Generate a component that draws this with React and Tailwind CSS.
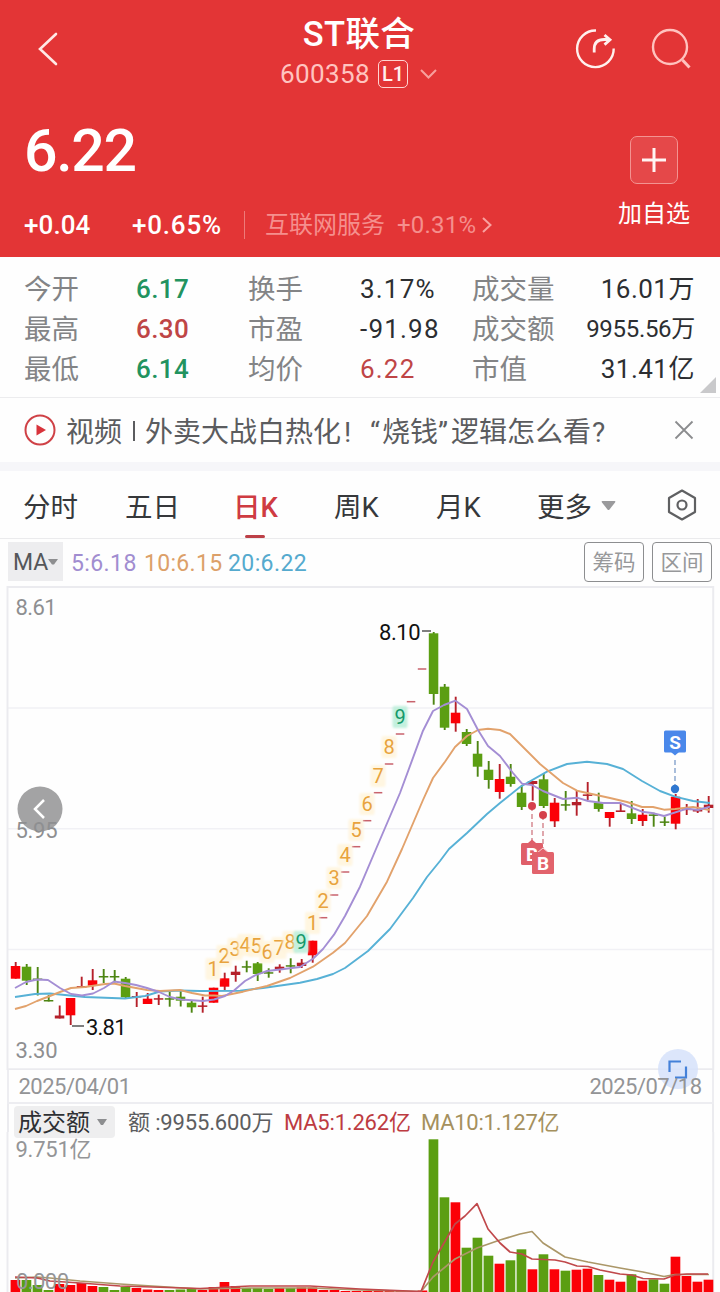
const RED = '#fb0007';
const DARK_RED = '#b5202a';
const GREEN = '#5b9e12';

// [direction, high, bodyTop, bodyBottom, low]
const candles = [
  ['r', 962, 966, 978.7, 978.7],
  ['g', 964, 966.7, 980.7, 985],
  ['g', 967, 978.5, 979.5, 995.5],
  ['g', 995, 1000, 1001.5, 1001.5],
  ['r', 1005.5, 1015.5, 1018.5, 1018.5],
  ['r', 998, 998, 1015.3, 1025],
  ['r', 976.7, 986, 988, 988],
  ['r', 969, 980.3, 985.7, 990],
  ['g', 969, 976, 977.2, 983],
  ['g', 970, 976, 977.2, 982.5],
  ['g', 977, 978.7, 997.3, 999],
  ['r', 992, 996, 997, 1007],
  ['r', 993, 998.7, 1004, 1004],
  ['r', 994.7, 998.2, 999.4, 1005],
  ['g', 991.7, 998.2, 999.4, 1006.7],
  ['g', 991, 996.7, 1000.7, 1006.5],
  ['g', 1000, 1002.7, 1007.3, 1012.7],
  ['r', 996.7, 1005.4, 1006.6, 1012.7],
  ['r', 987.7, 987.7, 1002.7, 1002.7],
  ['r', 972.7, 978.3, 986.7, 990],
  ['r', 965.7, 971.7, 975, 981.7],
  ['g', 960.7, 966.2, 967.4, 972.3],
  ['g', 962, 963.3, 974, 981],
  ['g', 968.3, 972.2, 973.4, 977.7],
  ['r', 964.3, 966.7, 969.3, 972.7],
  ['g', 958.3, 965.2, 966.4, 973.3],
  ['r', 959, 962.7, 966, 968],
  ['r', 940.7, 940.7, 955.3, 962.7],
  ['l', 917.7],
  ['l', 895],
  ['l', 872],
  ['l', 846.7],
  ['l', 820.7],
  ['l', 792.7],
  ['l', 764],
  ['l', 734],
  ['l', 701.7],
  ['l', 669],
  ['g', 632, 633.3, 694, 704.7],
  ['g', 684, 686.7, 727.7, 730],
  ['r', 696.7, 712.7, 723.3, 731.7],
  ['g', 729, 732, 744, 746],
  ['g', 741, 753.7, 766.7, 776.7],
  ['g', 761, 769.7, 780, 788.7],
  ['r', 764, 779, 792, 798.7],
  ['g', 764, 776.7, 784, 786.7],
  ['g', 785, 792.7, 807, 810],
  ['r', 781, 781, 784, 800.7],
  ['g', 774, 779.3, 806, 808],
  ['r', 798, 802.7, 821.3, 827],
  ['g', 791, 804.2, 805.4, 810.7],
  ['r', 790.7, 802, 805.3, 815.7],
  ['r', 782, 794.4, 795.6, 800],
  ['g', 792.7, 802.7, 809, 811.7],
  ['r', 812, 812, 818, 826.7],
  ['r', 804, 810.4, 812, 812],
  ['g', 801, 813.3, 819, 824],
  ['r', 809, 814.7, 821, 826],
  ['g', 812.7, 814.4, 815.6, 826.7],
  ['g', 816.7, 821.4, 822.6, 826],
  ['r', 794, 796.7, 823.7, 829.3],
  ['r', 804, 808.6, 809.8, 815],
  ['r', 799, 810, 811.2, 813],
  ['r', 796, 804.7, 808, 812.7],
];

// top edge of each turnover bar
const volumes = [
  ['r', 1280], ['g', 1280], ['g', 1285], ['g', 1290], ['r', 1284], ['r', 1285], ['r', 1283], ['r', 1286],
  ['g', 1287], ['g', 1290], ['g', 1287], ['r', 1288], ['r', 1289.5], ['r', 1290], ['g', 1290], ['g', 1289.5],
  ['g', 1289], ['r', 1290], ['r', 1287], ['r', 1282], ['r', 1286], ['g', 1288], ['g', 1288], ['g', 1289],
  ['r', 1288], ['g', 1288], ['r', 1287.5], ['r', 1287.5], ['r', 1290], ['r', 1290], ['r', 1291], ['r', 1291],
  ['r', 1291], ['r', 1291], ['r', 1291], ['r', 1291], ['r', 1291], ['r', 1290.5],
  ['g', 1139.3], ['g', 1197.3], ['r', 1202.3], ['g', 1247.7], ['g', 1237.7], ['g', 1255.7], ['r', 1263.7],
  ['g', 1260.3], ['g', 1249.3], ['r', 1269.3], ['g', 1254.3], ['r', 1269.3], ['g', 1270.7], ['r', 1269.7],
  ['r', 1268.7], ['g', 1275], ['r', 1279.7], ['r', 1281.7], ['g', 1274.3], ['r', 1280.7], ['g', 1279.3],
  ['g', 1283.7], ['r', 1256.7], ['r', 1276], ['r', 1281.7], ['r', 1279.7],
];

const ma5 =
  '15,988 26,982 37,979.5 48,980 60,988 71,994 82,995.5 93,993.5 104,988 114,981.5 125,983 136,985 147,988 159,992 170,997 181,999.5 203,1001 214,999.5 225,996 234,990.5 245,981 255,975.3 267,971 280,969.5 300,967 313,958.7 323,949 334,934.7 345,916 360,886.7 376,849 400,793 423,730.7 433,711 444,705 455.5,700.7 467,709 478,730 488,746 500,756 513,773 522,783.7 532,785 543,791 563,799 577,797.7 588,801 603,803 620,803 642,811.7 652,813 664,816 687,808.7 698,810 710,806.7';
const ma10 =
  '15,1009 26,1006 37,1001 50,996 60,992 71,988 85,987 105,984 114,983.5 125,986 147,990 160,991 180,990 192,993 205,995.5 214,995.5 222,996 243,991.7 267,986 290,978 313,966.7 333,952.7 345,943 367,916 387,881.7 402,849 423,800 433,778 445,761.7 455,747 467,736 478,730 488,728.7 500,730 510,734 540,764 563,783 577,790.7 610,798 627,802 642,807 653,807 664,809.7 675,809 693,807 710,810';
const ma20 =
  '15,997 35,994 50,993.5 85,997 125,998.5 145,996 160,991.5 180,990.5 200,991 240,990.7 263,988 300,982.7 317,979 333,974 345,968 368,951 390,929 413,898 427,877 440,861 449,849 467,833 487,814 500,803 520,787 547,771.7 567,764 587,761.7 607,764 623,769 642,781 660,791 675,796.7 693,801 710,803';

const volMa5 =
  '15,1277 37,1278 50,1281 80,1283 120,1286 200,1288.5 250,1286 310,1286 360,1289 421,1291.5 433,1262 455,1224 465,1216 477,1203.7 488,1229 500,1243 510,1252 522,1254 532,1259 555,1260 565,1262 577,1266 588,1266.5 600,1270 620,1274 632,1275 643,1278.5 664,1279 675,1275 687,1274 708,1274';
const volMa10 =
  '15,1278 37,1277 50,1278 80,1281 120,1284 200,1289 250,1288 310,1288 360,1290 421,1291.5 433,1277 455,1259 477,1248 500,1240 520,1234 532,1231.5 543,1243 565,1257 588,1262 620,1268 643,1272 664,1276.5 675,1274.5 709,1274.5';

const counters = [
  [213, 969, 1], [224, 956, 2], [235, 949, 3], [245, 945, 4], [256, 946, 5], [267, 952, 6],
  [279, 948, 7], [290, 942, 8], [301, 942, 9], [312.5, 923, 1], [323, 901, 2], [334, 878, 3],
  [345, 855, 4], [356, 830, 5], [367, 804, 6], [378, 776, 7], [389, 747, 8], [400, 717, 9],
];

const quotes = [
  ['今开', '6.17', 'text-[#22935f]', '换手', '3.17%', 'text-[#2c2e31]', '成交量', '16.01', '万'],
  ['最高', '6.30', 'text-[#bf4546]', '市盈', '-91.98', 'text-[#2c2e31]', '成交额', '9955.56', '万'],
  ['最低', '6.14', 'text-[#22935f]', '均价', '6.22', 'text-[#bf4546]', '市值', '31.41', '亿'],
];

const xOf = (i) => 15.3 + i * 11;

function Header() {
  return (
    <header className="h-[257px] bg-[#e33536] text-white">
      <div className="flex h-[98px] justify-between pl-[36px] pr-[27px]">
        <svg className="mt-[32px] h-[34px] w-[132px]" viewBox="0 0 132 34" fill="none">
          <path d="M20 2 4 17 20 32" stroke="#ffe9e6" strokeWidth="2.600" strokeLinecap="round" />
        </svg>
        <div className="flex flex-col items-center pr-[25px] pt-[14px]">
          <h1 className="text-[34.5px] font-medium leading-[41px] tracking-[0.4px]">ST联合</h1>
          <div className="flex h-[38px] items-center text-[#ffc4c0]">
            <span className="text-[26px] leading-[36px] tracking-[0.4px]">600358</span>
            <span className="ml-[8px] flex h-[28px] w-[30px] items-center justify-center rounded-[5px] border border-[#ffd5d2] text-[20px] font-medium text-[#fff0ee]">
              L1
            </span>
            <svg className="ml-[11px] h-[12px] w-[19px]" viewBox="0 0 19 12" fill="none">
              <path d="m2 2 7.500 7.500L17 2" stroke="#f7a09d" strokeWidth="2" />
            </svg>
          </div>
        </div>
        <div className="flex gap-[34px] pt-[27px]">
          <svg className="h-[44px] w-[42px]" viewBox="0 0 42 44" fill="none" stroke="#fff0ee" strokeWidth="2.400">
            <path d="M21 3.500A18.300 18.300 0 1 0 38.700 21.500" />
            <path d="M19.200 25.500V22c0-6.500 4-9.500 10-9.500h5" strokeWidth="2.800" />
            <path d="m29.500 8 5.500 4.800-5.500 4.800" strokeWidth="2.800" />
          </svg>
          <svg className="h-[44px] w-[42px]" viewBox="0 0 42 44" fill="none" stroke="#ffc2be" strokeWidth="2.400">
            <circle cx="19" cy="20" r="17" />
            <path d="m31.500 33 7 7.500" strokeWidth="3" />
          </svg>
        </div>
      </div>
      <div className="flex justify-between pl-[24px] pr-[30px]">
        <div>
          <div className="mt-[20px] h-[66px] text-[59px] font-medium leading-[66px] tracking-[-1.3px]">6.22</div>
          <div className="mt-[23px] flex h-[36px] items-center text-[26px] leading-[36px]">
            <span className="w-[108px] font-medium tracking-[0.1px]">+0.04</span>
            <span className="w-[112px] font-medium tracking-[0.8px]">+0.65%</span>
            <span className="h-[28px] w-px bg-[#ee7a79]" />
            <span className="ml-[20px] w-[132px] text-[24px] text-[#f58f8d]">互联网服务</span>
            <span className="text-[24px] tracking-[0.2px] text-[#f58f8d]">+0.31%</span>
            <svg className="ml-[5px] h-[18px] w-[12px]" viewBox="0 0 12 18" fill="none">
              <path d="m2 2 7.500 7L2 16" stroke="#f9a19f" strokeWidth="2" />
            </svg>
          </div>
        </div>
        <div className="flex flex-col items-center pt-[38px]">
          <div className="flex h-[48px] w-[48px] items-center justify-center rounded-[7px] border border-[#f39391] bg-[#e54849]">
            <svg className="h-[24px] w-[24px]" viewBox="0 0 24 24">
              <path d="M12 0v24M0 12h24" stroke="#fff4f2" strokeWidth="3" />
            </svg>
          </div>
          <span className="mt-[12px] text-[24px] leading-[36px]">加自选</span>
        </div>
      </div>
    </header>
  );
}

function Quotes() {
  return (
    <section className="relative h-[141px] border-b border-[#ececee] pt-[12px]">
      {quotes.map(([a, av, aColor, b, bv, bColor, c, cv, unit]) => (
        <div key={a} className="flex h-[40px] items-center pl-[24px] pr-[25px] text-[26px] leading-[40px]">
          <span className="w-[112px] pt-[2px] text-[27.5px] text-[#838486]">{a}</span>
          <span className={`w-[112px] font-medium tracking-[0.4px] ${aColor}`}>{av}</span>
          <span className="w-[112px] pt-[2px] text-[27.5px] text-[#838486]">{b}</span>
          <span className={`w-[112px] tracking-[1.2px] ${bColor}`}>{bv}</span>
          <span className="pt-[2px] text-[27.5px] text-[#838486]">{c}</span>
          <span
            className={`ml-auto whitespace-nowrap text-[#2c2e31] ${cv.length > 5 ? 'text-[24px] tracking-[-0.3px]' : 'tracking-[0.5px]'}`}
          >
            {cv}
            {unit}
          </span>
        </div>
      ))}
      <svg className="absolute bottom-[4px] right-[4px] h-[16px] w-[16px]" viewBox="0 0 16 16">
        <path d="M16 0v16H0z" fill="#c9c9cb" />
      </svg>
    </section>
  );
}

function NewsBar() {
  return (
    <section className="flex h-[73px] items-start border-b-[9px] border-[#f6f6f9] pl-[24px] pr-[26px]">
      <svg className="mt-[16px] h-[32px] w-[32px]" viewBox="0 0 32 32">
        <circle cx="16" cy="16" r="14.500" fill="none" stroke="#cf4146" strokeWidth="2" />
        <path d="M12.500 10.500v11l9.500-5.500z" fill="#d8333b" />
      </svg>
      <div className="ml-[10px] flex whitespace-nowrap text-[28px] leading-[69px] text-[#5b5c5f]">
        <span>视频</span>
        <span className="ml-[11px] mr-[10px] mt-[23px] h-[20px] w-[2px] bg-[#5b5c5f]" />
        <span>外卖大战白热化</span>
        <span className="w-[29px] pl-[3px]">!</span>
        <span className="w-[12px]">“</span>
        <span>烧钱</span>
        <span className="w-[13px]">”</span>
        <span>逻辑怎么看</span>
        <span className="pl-px">?</span>
      </div>
      <svg className="ml-auto mt-[22px] h-[20px] w-[20px]" viewBox="0 0 20 20">
        <path d="m1.500 1.500 17 17m0-17-17 17" stroke="#8b8c8e" strokeWidth="1.800" />
      </svg>
    </section>
  );
}

function Tabs() {
  return (
    <nav className="flex h-[68px] items-start border-b border-[#ebebed] pl-[23px] text-[27.5px] leading-[74px] text-[#36383b]">
      <span className="w-[102px]">分时</span>
      <span className="w-[108px]">五日</span>
      <span className="flex w-[101px] flex-col text-[#cf3b42]">
        <span className="h-[64px] font-medium">日K</span>
        <span className="ml-[12px] h-[3px] w-[20px] rounded-full bg-[#bd4047]" />
      </span>
      <span className="w-[102px]">周K</span>
      <span className="w-[101px]">月K</span>
      <span>更多</span>
      <svg className="ml-[9px] mt-[30px] h-[10px] w-[15px]" viewBox="0 0 15 10">
        <path d="M1.500 0h12q1.500 0 .500 1.500L8.500 8.500q-1 1-2 0L1 1.500Q0 0 1.500 0z" fill="#9a9a9c" />
      </svg>
      <svg className="ml-[51px] mt-[18px] h-[32px] w-[30px]" viewBox="0 0 30 32" fill="none" stroke="#5f6062" strokeWidth="2.200">
        <path d="M15 1.500 28 9v14l-13 7.500L2 23V9z" strokeLinejoin="round" />
        <circle cx="15" cy="16" r="4.500" />
      </svg>
    </nav>
  );
}

function MaBar() {
  return (
    <div className="flex h-[47px] items-start px-[8px] pt-[3px] text-[23px] leading-[43px]">
      <span className="flex h-[39px] w-[55px] items-center bg-[#ededef] pl-[5px] text-[#55575a]">
        <span className="pt-[2px]">MA</span>
        <svg className="h-[6px] w-[10px]" viewBox="0 0 10 6">
          <path d="M0 0h10L6 5.500H4z" fill="#8d8e90" />
        </svg>
      </span>
      <span className="w-[73px] pl-[8px] tracking-[0.4px] text-[#a18dd0]">5:6.18</span>
      <span className="w-[84px] pl-[8px] tracking-[0.3px] text-[#dca069]">10:6.15</span>
      <span className="w-[90px] pl-[8px] tracking-[0.4px] text-[#55aace]">20:6.22</span>
      <div className="ml-auto flex gap-[8px] text-[21.5px] leading-[40px] text-[#97989a]">
        <span className="h-[40px] w-[60px] rounded-[4px] border border-[#8d8e90] text-center">筹码</span>
        <span className="h-[40px] w-[60px] rounded-[4px] border border-[#8d8e90] text-center">区间</span>
      </div>
    </div>
  );
}

function Candle({ index, data }) {
  const [dir, high, top, bottom, low] = data;
  const x = xOf(index);
  if (dir === 'l') {
    return <line x1={x - 4.500} x2={x + 4} y1={high} y2={high} stroke="#c8626c" strokeWidth="1.500" />;
  }
  const color = dir === 'r' ? RED : GREEN;
  const wick = dir === 'r' ? DARK_RED : '#4d8512';
  return (
    <g>
      <line x1={x + 0.400} x2={x + 0.400} y1={high} y2={low} stroke={wick} strokeWidth="1.900" />
      <rect x={x - 4.500} y={top} width="9.500" height={Math.max(bottom - top, 1.500)} fill={bottom - top < 4 ? wick : color} />
    </g>
  );
}

function Signal({ x, y, label, color }) {
  return (
    <g>
      <rect x={x - 11} y={y - 11} width="22" height="22" rx="1.500" fill={color} />
      <text x={x} y={y + 7} textAnchor="middle" fontSize="19" fontWeight="700" fill="#fff">
        {label}
      </text>
    </g>
  );
}

function PriceChart() {
  return (
    <svg className="block h-[484px] w-[720px]" viewBox="0 586 720 484">
      <defs>
        <filter id="soft" x="-30%" y="-30%" width="160%" height="160%">
          <feGaussianBlur stdDeviation="1.200" />
        </filter>
      </defs>
      <g stroke="#f1f1f5" strokeWidth="1.500">
        <path d="M8 708h705M8 828.700h705M8 949.500h705" />
      </g>
      <path d="M7.500 1070V587h705.700v483" fill="none" stroke="#ebebef" strokeWidth="2" />
      <path d="M7 1069.500h707" stroke="#ebebef" strokeWidth="2.500" />

      <circle cx="40" cy="809" r="22.500" fill="#a3a3a4" />
      <path d="m44 800-9 9 9 9" fill="none" stroke="#fff" strokeWidth="2.500" />

      <g fontSize="22" fill="#8e8f91">
        <text x="15.500" y="615" textLength="41">8.61</text>
        <text x="15.500" y="838" textLength="42">5.95</text>
        <text x="15.500" y="1058" textLength="42">3.30</text>
      </g>

      {candles.map((c, i) => (
        <Candle key={i} index={i} data={c} />
      ))}

      <g fill="none" strokeWidth="1.900" strokeLinejoin="round">
        <polyline points={ma20} stroke="#57b1d6" />
        <polyline points={ma10} stroke="#e2a26c" />
        <polyline points={ma5} stroke="#a48ed4" />
      </g>

      {/* nine-turn counters */}
      {counters.map(([x, y, n], i) => (
        <g key={i}>
          <rect
            x={x - 7.500}
            y={y - 11}
            width="15"
            height="22"
            rx="2"
            fill={n === 9 ? '#c3f0de' : '#fff4dc'}
            fillOpacity={n === 9 ? 1 : 0.85}
            filter="url(#soft)"
          />
          <text x={x} y={y + 7} textAnchor="middle" fontSize="20" fill={n === 9 ? '#16996a' : '#e8a33d'}>
            {n}
          </text>
        </g>
      ))}

      <path d="M422 631h9M72 1026h12" stroke="#555" strokeWidth="1.500" />
      <g fontSize="22" fill="#111">
        <text x="379" y="640" textLength="41.500">8.10</text>
        <text x="86" y="1035" textLength="40.500">3.81</text>
      </g>

      <g strokeWidth="1.300" strokeDasharray="5 3" fill="none">
        <path d="M532 806v36M543 815v36" stroke="#cf7881" />
        <path d="M675 760v28" stroke="#7b9bc8" />
      </g>
      <circle cx="532" cy="806" r="4" fill="#d5404b" />
      <circle cx="543" cy="815" r="4" fill="#d5404b" />
      <circle cx="675" cy="789" r="4.200" fill="#2f77d0" />
      <path d="m528 843 4-3.500 4 3.500z" fill="#df5f69" />
      <Signal x={532} y={854} label="B" color="#df5f69" />
      <path d="m537 853 6-5 6 5z" fill="#e2636c" stroke="#f9d5d8" />
      <Signal x={543} y={863} label="B" color="#e2636c" />
      <Signal x={675} y={741.500} label="S" color="#4a88ea" />
      <path d="m671 752 4 3.500 4-3.500z" fill="#4a88ea" />
    </svg>
  );
}

function DateRow() {
  return (
    <div className="relative mx-[6.5px] flex h-[34px] items-center justify-between border-x-2 border-b-2 border-[#ededf1] pl-[10px] pr-[10px] text-[22px] leading-[32px] tracking-[-0.5px] text-[#939496]">
      <span className="pt-[2px]">2025/04/01</span>
      <span className="relative z-10 pt-[2px]">2025/07/18</span>
      <svg className="absolute right-[13.5px] top-[-21px] h-[40px] w-[40px]" viewBox="0 0 40 40">
        <circle cx="20" cy="20" r="20" fill="#d6e2fa" fillOpacity="0.850" />
        <path d="M11.500 23V12.500H23M28 17.500V28.500H17" fill="none" stroke="#4481d9" strokeWidth="2.200" />
      </svg>
    </div>
  );
}

function VolumeChart() {
  return (
    <div>
      <div className="mx-[6.5px] flex h-[28px] items-start border-x-2 border-[#ebebef] pl-[5.5px] pt-[2px] text-[22px] leading-[34px]">
        <span className="flex h-[32px] w-[101px] items-center rounded-[4px] bg-[#eeeeef] pl-[4px] text-[24px] text-[#2e3033]">
          <span className="pt-[2px]">成交额</span>
          <svg className="ml-[7px] h-[7px] w-[10px]" viewBox="0 0 10 7">
            <path d="M0 0h10L6 6H4z" fill="#8d8e90" />
          </svg>
        </span>
        <span className="w-[169px] whitespace-nowrap pl-[13px] tracking-[-0.15px] text-[#5c5d60]">额 :9955.600万</span>
        <span className="w-[137px] whitespace-nowrap tracking-[-0.2px] text-[#bd3b41]">MA5:1.262亿</span>
        <span className="whitespace-nowrap tracking-[-0.25px] text-[#a5905d]">MA10:1.127亿</span>
      </div>
      <svg className="block h-[160px] w-[720px]" viewBox="0 1132 720 160">
        <path d="M7.500 1132v160M713.200 1132v160" stroke="#ebebef" strokeWidth="2" />
        {volumes.map(([dir, y], i) => (
          <rect key={i} x={xOf(i) - 4.700} y={y} width="9.700" height={1292 - y} fill={dir === 'r' ? RED : GREEN} />
        ))}
        <g fill="none" strokeWidth="1.700" strokeLinejoin="round">
          <polyline points={volMa10} stroke="#ab9768" />
          <polyline points={volMa5} stroke="#c0484b" />
        </g>
        <g fontSize="22" fill="#949597">
          <text x="15.500" y="1157" textLength="76">9.751亿</text>
          <text x="16" y="1289" textLength="53">0.000</text>
        </g>
      </svg>
    </div>
  );
}

export default function App() {
  return (
    <main className="h-[1292px] w-[720px] overflow-hidden bg-[#fefefe] font-['Roboto','Noto_Sans_CJK_SC',sans-serif]">
      <Header />
      <Quotes />
      <NewsBar />
      <Tabs />
      <MaBar />
      <PriceChart />
      <DateRow />
      <VolumeChart />
    </main>
  );
}
